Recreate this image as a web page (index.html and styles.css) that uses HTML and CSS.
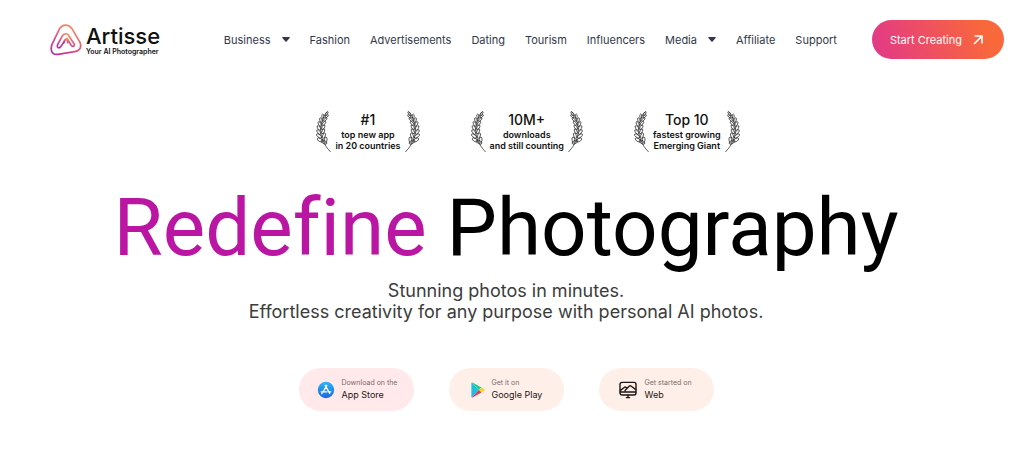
FILE: index.html
```html
<!DOCTYPE html>
<html lang="en">
<head>
    <meta charset="UTF-8">
    <meta name="viewport" content="width=device-width, initial-scale=1.0">
    <title>Artisse - Your AI Photographer</title>
    <link rel="stylesheet" href="styles.css">
</head>
<body>
    <!-- shared shapes -->
    <svg class="sprite" aria-hidden="true">
        <symbol id="caret" viewBox="0 0 8 5">
            <path d="M0.8 0h6.4q1 .1.4.9L4.6 4.4q-.6.6-1.2 0L.4.9Q-.2.1.8 0z" fill="currentColor"/>
        </symbol>
        <symbol id="laurel" viewBox="0 0 15 42">
            <g fill="none" stroke="#222" stroke-width="0.7">
                <path d="M14.6 41C7 33 4 25 5 16C6 9 8 4 11 1"/>
                <ellipse cx="8" cy="31" rx="1.6" ry="3.2" transform="rotate(-58 8 31)"/>
                <ellipse cx="4" cy="29" rx="1.5" ry="3.1" transform="rotate(-60 4 29)"/>
                <ellipse cx="3" cy="25" rx="1.4" ry="3" transform="rotate(-50 3 25)"/>
                <ellipse cx="2.8" cy="21" rx="1.3" ry="2.8" transform="rotate(-42 2.8 21)"/>
                <ellipse cx="3" cy="17" rx="1.3" ry="2.7" transform="rotate(-36 3 17)"/>
                <ellipse cx="3.7" cy="13" rx="1.2" ry="2.6" transform="rotate(-26 3.7 13)"/>
                <ellipse cx="4.9" cy="9.2" rx="1.1" ry="2.5" transform="rotate(-16 4.9 9.2)"/>
                <ellipse cx="6.8" cy="5.4" rx="1" ry="2.4" transform="rotate(-4 6.8 5.4)"/>
                <ellipse cx="10.6" cy="2.6" rx="0.9" ry="2.3" transform="rotate(34 10.6 2.6)"/>
                <ellipse cx="9.6" cy="29" rx="1.4" ry="3" transform="rotate(8 9.6 29)"/>
                <ellipse cx="8" cy="24.6" rx="1.3" ry="2.8" transform="rotate(16 8 24.6)"/>
                <ellipse cx="7.2" cy="20.3" rx="1.2" ry="2.6" transform="rotate(24 7.2 20.3)"/>
                <ellipse cx="7.3" cy="16.2" rx="1.2" ry="2.5" transform="rotate(32 7.3 16.2)"/>
                <ellipse cx="8" cy="12.3" rx="1.1" ry="2.4" transform="rotate(38 8 12.3)"/>
                <ellipse cx="9.2" cy="8.5" rx="1" ry="2.3" transform="rotate(44 9.2 8.5)"/>
                <ellipse cx="10.6" cy="5.4" rx="0.9" ry="2.2" transform="rotate(48 10.6 5.4)"/>
            </g>
        </symbol>
    </svg>

    <header class="header">
        <a class="logo" href="#">
            <svg class="logo-mark" viewBox="0 0 32 32" aria-hidden="true">
                <defs>
                    <linearGradient id="mark" x1="0.8" y1="0" x2="0.2" y2="1">
                        <stop offset="0" stop-color="#f79a5c"/>
                        <stop offset="0.5" stop-color="#e4577b"/>
                        <stop offset="1" stop-color="#b62fa8"/>
                    </linearGradient>
                </defs>
                <g fill="none" stroke="url(#mark)" stroke-width="1.7" stroke-linecap="round" stroke-linejoin="round">
                    <path d="M9.6 4.6Q12.2 0.6 16.6 1.2Q19.6 1.6 21.8 4.4L29.6 17.6Q32.4 23 28.4 26.2Q27 27.2 24.6 27.6L8 30.4Q1.4 31 1.2 25Q1.1 23 2 20.4Z"/>
                    <path d="M14.4 17.6L10.8 22.6Q9.4 24.4 7.8 23.4Q6.8 22.4 7.6 20.6L12.4 11.8Q14 9.4 16.4 9.8Q17.8 10.2 18.8 11.8L24.2 20Q25 22.2 23 22.4Q21.8 22.2 21 21L17.2 14.6"/>
                    <path d="M13.6 19Q14.6 15.2 17.2 14.6L17.8 18.6"/>
                </g>
            </svg>
            <span class="logo-text">
                <span class="logo-name">Artisse</span>
                <span class="logo-tag">Your AI Photographer</span>
            </span>
        </a>
        <nav class="nav">
            <a class="has-menu" href="#">Business <svg class="caret" aria-hidden="true"><use href="#caret"/></svg></a>
            <a href="#">Fashion</a>
            <a href="#">Advertisements</a>
            <a href="#">Dating</a>
            <a href="#">Tourism</a>
            <a href="#">Influencers</a>
            <a class="has-menu" href="#">Media <svg class="caret" aria-hidden="true"><use href="#caret"/></svg></a>
            <a href="#">Affiliate</a>
            <a href="#">Support</a>
        </nav>
        <a class="cta" href="#">
            Start Creating
            <svg class="cta-arrow" viewBox="0 0 10 10" aria-hidden="true">
                <path d="M1 9L8.6 1.4M1.6 1H9V8.4" fill="none" stroke="#fff" stroke-width="1.6"/>
            </svg>
        </a>
    </header>

    <main class="hero">
        <ul class="awards">
            <li class="award">
                <svg class="laurel" aria-hidden="true"><use href="#laurel"/></svg>
                <p class="award-text"><strong>#1</strong>top new app<br>in 20 countries</p>
                <svg class="laurel flip" aria-hidden="true"><use href="#laurel"/></svg>
            </li>
            <li class="award">
                <svg class="laurel" aria-hidden="true"><use href="#laurel"/></svg>
                <p class="award-text"><strong>10M+</strong>downloads<br>and still counting</p>
                <svg class="laurel flip" aria-hidden="true"><use href="#laurel"/></svg>
            </li>
            <li class="award">
                <svg class="laurel" aria-hidden="true"><use href="#laurel"/></svg>
                <p class="award-text"><strong>Top 10</strong>fastest growing<br>Emerging Giant</p>
                <svg class="laurel flip" aria-hidden="true"><use href="#laurel"/></svg>
            </li>
        </ul>

        <h1><span class="accent">Redefine</span> Photography</h1>
        <p class="lead">Stunning photos in minutes.<br>Effortless creativity for any purpose with personal AI photos.</p>

        <div class="stores">
            <a class="store pink" href="#">
                <svg class="store-icon" viewBox="0 0 18 18" aria-hidden="true">
                    <defs>
                        <linearGradient id="sky" x1="0" y1="0" x2="0" y2="1">
                            <stop offset="0" stop-color="#2fb4f2"/>
                            <stop offset="1" stop-color="#1d66e0"/>
                        </linearGradient>
                    </defs>
                    <circle cx="9" cy="9" r="8.2" fill="url(#sky)"/>
                    <path d="M9.8 4.4L5.9 11.2M8.2 4.4L12.7 12.4M4.2 10.8H10M12 10.8H13.8M5 12.3L4.8 12.7" fill="none" stroke="#fff" stroke-width="1.3" stroke-linecap="round"/>
                </svg>
                <span class="store-text"><small>Download on the</small>App Store</span>
            </a>
            <a class="store peach" href="#">
                <svg class="store-icon" viewBox="0 0 18 18" aria-hidden="true">
                    <path d="M4.8 1.6L12 9L4.8 16.4Q4.4 16 4.4 15.4V2.6Q4.4 2 4.8 1.6z" fill="#20bfe0"/>
                    <path d="M4.8 1.6Q5.4 1.3 6 1.7L14.4 6.5L12 9z" fill="#20cf8c"/>
                    <path d="M14.4 6.5L17.4 8.3Q18 9 17.4 9.7L14.4 11.5L12 9z" fill="#fcd22d"/>
                    <path d="M4.8 16.4Q5.4 16.7 6 16.3L14.4 11.5L12 9z" fill="#dc3a58"/>
                </svg>
                <span class="store-text"><small>Get it on</small>Google Play</span>
            </a>
            <a class="store peach wide" href="#">
                <svg class="store-icon" viewBox="0 0 18 18" aria-hidden="true">
                    <g fill="none" stroke="#1d1717" stroke-width="1.4" stroke-linejoin="round" stroke-linecap="round">
                        <rect x="1" y="1.4" width="16" height="12.6" rx="2"/>
                        <path d="M1.4 9.4L5.6 6.2Q6.4 5.8 7.2 6.6L8 7.4M6 9.4L10.4 5Q11.2 4.4 12 5L16.8 8.6M1.4 11H16.6M9 14V16.4M7.4 16.6H10.6"/>
                    </g>
                </svg>
                <span class="store-text"><small>Get started on</small>Web</span>
            </a>
        </div>
    </main>
</body>
</html>
```
FILE: styles.css
```css
* {
    box-sizing: border-box;
}
body {
    font-family: Inter, "Liberation Sans", sans-serif;
    background-color: #fff;
    color: #111;
    margin: 0;
}
a {
    color: inherit;
    text-decoration: none;
}
.sprite {
    display: none;
}
.header {
    display: flex;
    align-items: center;
    padding: 20px 20px 0 50px;
}
.logo {
    display: flex;
    align-items: center;
    gap: 4px;
}
.logo-mark {
    width: 32px;
    height: 32px;
}
.logo-text {
    display: flex;
    flex-direction: column;
}
.logo-name {
    font-size: 22px;
    line-height: 24px;
    font-weight: 500;
}
.logo-tag {
    font-size: 7px;
    line-height: 8px;
    font-weight: 600;
}
.nav {
    display: flex;
    align-items: center;
    gap: 20px;
    margin-left: auto;
    font-size: 11px;
    line-height: 16px;
    color: #33374a;
}
.has-menu {
    display: flex;
    align-items: center;
    gap: 11px;
}
.caret {
    width: 8px;
    height: 5px;
}
.cta {
    display: flex;
    align-items: center;
    gap: 11px;
    height: 39px;
    margin-left: 35px;
    padding: 0 21px 0 18px;
    border-radius: 20px;
    background: linear-gradient(70deg, #e2378a, #f9683a 85%);
    color: #fff;
    font-size: 11px;
}
.cta-arrow {
    width: 10px;
    height: 10px;
}
.hero {
    text-align: center;
    padding-right: 12px;
}
.awards {
    display: flex;
    justify-content: center;
    gap: 51px;
    list-style: none;
    margin: 52px 0 0;
    padding: 0 0 0 44px;
}
.award {
    display: flex;
    gap: 4px;
}
.laurel {
    width: 15px;
    height: 42px;
}
.flip {
    transform: scaleX(-1);
}
.award-text {
    margin: 0;
    font-size: 9px;
    line-height: 11px;
    font-weight: 600;
}
.award-text strong {
    display: block;
    font-size: 14px;
    line-height: 18px;
    font-weight: 500;
}
h1 {
    margin: 24px 0 0;
    font-family: Roboto, "Liberation Sans", sans-serif;
    font-size: 80px;
    line-height: 103px;
    font-weight: 400;
    font-variant-ligatures: none;
    color: #000;
}
.accent {
    color: #bb16a3;
}
.lead {
    margin: 0;
    font-size: 18px;
    line-height: 21px;
    color: #3c3c3c;
}
.stores {
    display: flex;
    justify-content: center;
    gap: 35px;
    margin-top: 46px;
}
.store {
    display: flex;
    align-items: center;
    gap: 7px;
    width: 115px;
    height: 43px;
    padding-left: 18px;
    border-radius: 22px;
    text-align: left;
}
.wide {
    gap: 8px;
    padding-left: 20px;
}
.pink {
    background-color: #ffe9ea;
}
.peach {
    background-color: #ffefe9;
}
.store-icon {
    width: 18px;
    height: 18px;
}
.store-text {
    padding-bottom: 2px;
    font-size: 9px;
    line-height: 12px;
    color: #1d1717;
}
.store-text small {
    display: block;
    font-size: 7px;
    color: #7a6a6a;
}
```
